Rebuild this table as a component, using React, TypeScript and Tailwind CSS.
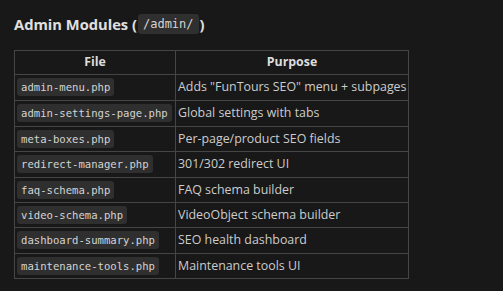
import React from "react";

const rows: [string, string, number][] = [
  ["admin-menu.php", 'Adds "FunTours SEO" menu + subpages', 26],
  ["admin-settings-page.php", "Global settings with tabs", 26],
  ["meta-boxes.php", "Per-page/product SEO fields", 25],
  ["redirect-manager.php", "301/302 redirect UI", 26],
  ["faq-schema.php", "FAQ schema builder", 25],
  ["video-schema.php", "VideoObject schema builder", 25],
  ["dashboard-summary.php", "SEO health dashboard", 26],
  ["maintenance-tools.php", "Maintenance tools UI", 25],
];

function Code({ children }: { children: React.ReactNode }) {
  return (
    <code className="inline-block whitespace-nowrap rounded-[3px] bg-[#2f2f2f] px-[4px] text-[10.6px] leading-[18px] text-[#d4d4d4] [font-family:'DejaVu_Sans_Mono','Liberation_Mono',monospace]">
      {children}
    </code>
  );
}

export default function App() {
  return (
    <div className="h-[291px] w-[503px] bg-[#181818] px-[14px] pt-[14px] text-[#cccccc] [font-family:'Open_Sans','Noto_Sans',sans-serif]">
      <h2 className="flex h-[20px] items-center text-[14.7px] font-bold text-[#e0e0e0]">
        <span>Admin Modules (</span>
        <code className="mx-[1px] inline-block rounded-[3px] bg-[#2f2f2f] px-[5px] text-[12px] font-normal leading-[20px] text-[#d4d4d4] [font-family:'DejaVu_Sans_Mono','Liberation_Mono',monospace]">
          /admin/
        </code>
        <span>)</span>
      </h2>
      <table className="mt-[16px] w-[395px] table-fixed border-collapse text-[12.4px]">
        <colgroup>
          <col className="w-[161px]" />
          <col />
        </colgroup>
        <thead>
          <tr className="h-[24px]">
            <th className="border border-[#454545] p-0 text-center font-bold text-[#dddddd]">File</th>
            <th className="border border-[#454545] p-0 text-center font-bold text-[#dddddd]">Purpose</th>
          </tr>
        </thead>
        <tbody>
          {rows.map(([f, p, h]) => (
            <tr key={f} style={{ height: h }}>
              <td className="whitespace-nowrap border border-[#454545] px-[2px] py-0 align-middle">
                <Code>{f}</Code>
              </td>
              <td className="whitespace-nowrap border border-[#454545] px-[2px] py-0 align-middle">{p}</td>
            </tr>
          ))}
        </tbody>
      </table>
    </div>
  );
}
